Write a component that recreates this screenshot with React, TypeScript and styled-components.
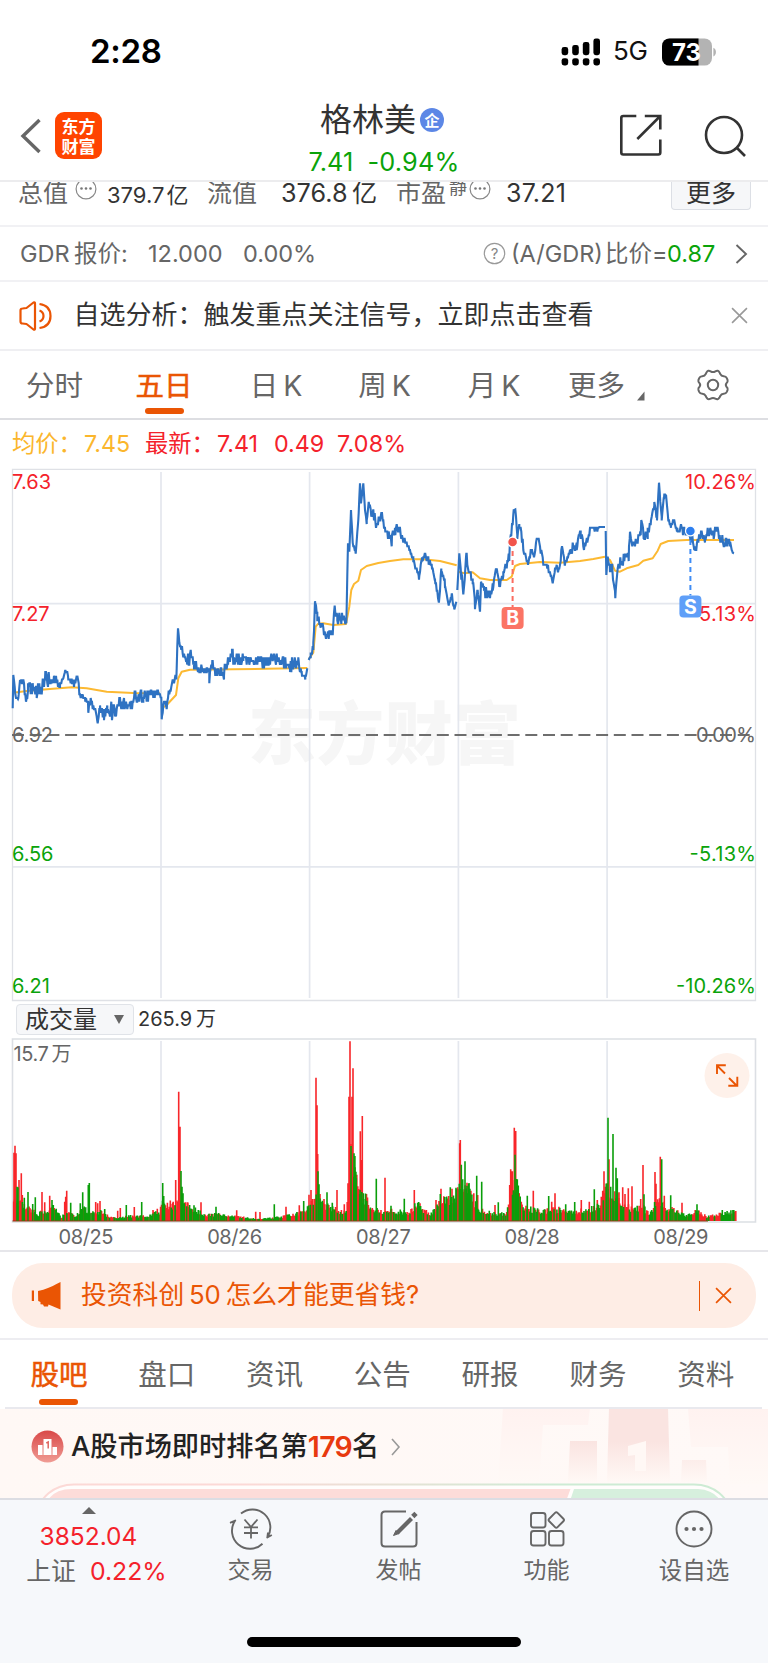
import React from "react";
import styled, { createGlobalStyle } from "styled-components";

const Global = createGlobalStyle`
  * { box-sizing: border-box; }
  body { margin: 0; background: #fff; font-family: Inter, "Noto Sans CJK SC", sans-serif; }
  svg { display: block; flex: none; overflow: visible; }
`;

const ORANGE = "#ea5504";
const RED = "#f4222b";
const GREEN = "#0aa30a";
const GRAY = "#666";
const INK = "#333";
const FONT = 'Inter, "Noto Sans CJK SC", sans-serif';

/* ---------- shared parts ---------- */

const Page = styled.main`
  width: 768px;
  height: 1663px;
  display: flex;
  flex-direction: column;
  overflow: hidden;
  background: #fff;
`;

const Text = styled.span<{ $w?: number; $ml?: number; $size?: number; $color?: string; $track?: number; $weight?: number }>`
  flex: none;
  display: block;
  width: ${(p) => (p.$w ? `${p.$w}px` : "auto")};
  margin-left: ${(p) => p.$ml ?? 0}px;
  font-size: ${(p) => p.$size ?? 24}px;
  font-weight: ${(p) => p.$weight ?? 400};
  line-height: 1.25;
  color: ${(p) => p.$color ?? GRAY};
  letter-spacing: ${(p) => p.$track ?? 0}px;
  white-space: nowrap;
`;

const Spacer = styled.div`
  flex: 1;
`;

/* ---------- status bar and header ---------- */

const StatusBar = styled.div`
  flex: none;
  height: 102px;
  padding: 1px 51px 0 90px;
  display: flex;
  align-items: center;
`;

const Header = styled.header`
  flex: none;
  height: 80px;
  display: grid;
  grid-template-columns: 240px 1fr 240px;
  border-bottom: 2px solid #ececee;
`;

const HeaderSide = styled.div<{ $end?: boolean }>`
  display: flex;
  align-items: center;
  height: 67px;
  padding: ${(p) => (p.$end ? "0 22px 0 0" : "0 0 0 20px")};
  justify-content: ${(p) => (p.$end ? "flex-end" : "flex-start")};
  gap: ${(p) => (p.$end ? 41 : 13)}px;
`;

const Logo = styled.div`
  width: 47px;
  height: 47px;
  border-radius: 9px;
  background: #ff4400;
  color: #fff;
  font: 700 17px/19.5px "Noto Sans CJK SC", sans-serif;
  display: flex;
  flex-direction: column;
  align-items: center;
  justify-content: center;
`;

const TitleBlock = styled.div`
  display: flex;
  flex-direction: column;
  align-items: center;
  gap: 9px;
`;

const TitleLine = styled.div`
  display: flex;
  align-items: center;
  height: 35px;
  gap: 4px;
  margin-right: 4px;
`;

const Badge = styled.span`
  width: 24px;
  height: 24px;
  border-radius: 50%;
  background: #5c87e6;
  color: #fff;
  font: 700 15px/23px "Noto Sans CJK SC", sans-serif;
  text-align: center;
`;

const PriceLine = styled.div`
  display: flex;
  gap: 14px;
`;

/* ---------- quote rows ---------- */

const QuoteRow = styled.section`
  flex: none;
  height: 45px;
  display: flex;
  align-items: flex-start;
  overflow: hidden;
  border-bottom: 2px solid #f1f1f4;
  padding-left: 18px;
`;

const QuoteCell = styled.div<{ $h: number }>`
  display: flex;
  align-items: center;
  height: ${(p) => p.$h}px;
`;

const MoreButton = styled.button`
  margin: 0 17px 0 auto;
  width: 80px;
  height: 28px;
  border: 1.5px solid #dcdfe5;
  border-top: 0;
  border-radius: 0 0 4px 4px;
  background: #f6f7f9;
  padding: 0;
  font: 25px/22px ${FONT};
  color: ${INK};
  display: flex;
  justify-content: center;
  align-items: flex-start;
`;

const Row = styled.section<{ $h: number; $line?: string; $pl?: number }>`
  flex: none;
  height: ${(p) => p.$h}px;
  display: flex;
  align-items: center;
  padding-left: ${(p) => p.$pl ?? 0}px;
  border-bottom: ${(p) => (p.$line ? `2px solid ${p.$line}` : "0")};
`;

const TabItem = styled.div<{ $w: number; $active?: boolean; $drop: number }>`
  position: relative;
  flex: none;
  width: ${(p) => p.$w}px;
  display: flex;
  justify-content: center;
  align-items: center;
  height: 100%;
  padding-top: 3px;
  color: ${(p) => (p.$active ? ORANGE : GRAY)};
  -webkit-text-stroke: ${(p) => (p.$active ? `0.5px ${ORANGE}` : "0")};
  font-size: 28.5px;
  line-height: 36px;
  word-spacing: -3px;
  &::after {
    content: "";
    display: ${(p) => (p.$active ? "block" : "none")};
    position: absolute;
    bottom: ${(p) => p.$drop}px;
    left: calc(50% - 19.5px);
    width: 39px;
    height: 6.5px;
    border-radius: 3px;
    background: ${ORANGE};
  }
`;

/* ---------- volume toolbar, promo, ranking ---------- */

const IndicatorButton = styled.button`
  width: 118px;
  height: 31px;
  padding: 0 9px 0 8px;
  border: 1.5px solid #e0e3e8;
  border-radius: 4px;
  background: #f6f7f9;
  display: flex;
  align-items: center;
  justify-content: space-between;
  font: 24px/28px ${FONT};
  color: ${INK};
`;

const Promo = styled.section`
  flex: none;
  height: 65px;
  margin: 11px 12px 10px;
  padding: 0 24px 0 19px;
  border-radius: 31px;
  background: #feede5;
  display: flex;
  align-items: center;
`;

const Rule = styled.div`
  width: 1.5px;
  height: 30px;
  background: ${ORANGE};
  margin-right: 15px;
`;

const InfoTabs = styled.nav`
  flex: none;
  height: 69px;
  display: flex;
  margin: 0 6px 0 5px;
  border-bottom: 2px solid #e9e9ee;
`;

const Ranking = styled.section`
  position: relative;
  flex: none;
  height: 89px;
  overflow: hidden;
  background: linear-gradient(90deg, #fff8f5, #fff9f7);
`;

const RankArt = styled.svg`
  position: absolute;
  left: 0;
  top: -1px;
`;

const RankTitle = styled.div`
  position: relative;
  display: flex;
  align-items: center;
  height: 75px;
  padding-left: 31px;
`;

/* ---------- bottom bar ---------- */

const BottomBar = styled.footer`
  flex: none;
  height: 165px;
  background: #f6f8fb;
  border-top: 2px solid #dcdde3;
  display: flex;
  flex-direction: column;
  align-items: center;
`;

const BottomItems = styled.div`
  width: 100%;
  height: 136.5px;
  display: grid;
  grid-template-columns: 177px 147px 149px 147px 148px;
`;

const BottomItem = styled.div`
  display: flex;
  flex-direction: column;
  align-items: center;
  padding-top: 9px;
  gap: 6.5px;
`;

const IndexItem = styled.div`
  display: flex;
  flex-direction: column;
  align-items: center;
  padding-top: 7px;
  gap: 7px;
`;

const IndexLine = styled.div`
  display: flex;
  gap: 14px;
  margin-left: 16px;
  margin-top: -3px;
`;

const HomeIndicator = styled.div`
  width: 274px;
  height: 10px;
  border-radius: 5px;
  background: #000;
`;

/* ---------- chart data, in thirds of a pixel from (0, 460) ---------- */

type Pt = [number, number, number?];

const price: Pt[][] = [
  [[38,745],[40,645],[48,720,8],[55,715],[60,660],[72,675,10],[78,725,4],[84,685,15],[110,690,15],[125,680,20],[135,655,20],[160,655,15],[180,668,8],[190,655],[196,630],[205,655,10],[215,665,15],[232,665,12],[240,705,8],[255,715,5],[265,740,20],[272,720,8],[285,755,12],[293,790],[300,740,10],[312,765,12],[322,740,18],[345,760,20],[355,725,12],[375,735,15],[395,735,12],[405,705,18],[430,708,18],[455,705,15],[472,695,10],[482,705,4]],
  [[484,710],[485,778],[490,730,8],[500,735,12],[508,690,8],[520,665,8],[529,650,6],[534,505],[540,560,8],[548,575,8],[558,600,6],[566,600,20],[574,585,15],[582,605,20],[595,628,8],[620,628,10],[628,650,15],[637,615,15],[650,635,10],[672,640,18],[684,605,8],[696,590,18],[710,595,20],[730,600,14],[760,605,12],[800,605,14],[828,595,18],[840,605,10],[870,612,18],[895,610,10],[905,640,10],[916,655,5],[922,625]],
  [[926,600],[932,585,4],[940,560,8],[945,424],[952,465,10],[965,490,12],[978,535,3],[990,515,10],[998,520,3],[1004,440,3],[1012,480,12],[1030,475,12],[1039,490],[1044,250],[1048,275],[1053,150],[1058,250,4],[1067,280,3],[1075,180],[1080,70],[1083,130],[1090,70],[1095,150],[1100,190,5],[1106,130,8],[1116,165,15],[1130,185,18],[1140,170,10],[1145,155,8],[1155,210,6],[1175,240,12],[1185,210,12],[1197,205,12],[1208,240,8],[1225,260,8],[1240,300,6],[1257,355,5],[1265,300,6],[1274,275,8],[1285,300,12],[1295,310,8],[1305,360,6],[1317,430,3],[1324,330,6],[1335,370,8],[1346,435,5],[1355,405,8],[1363,450,2],[1369,425]],
  [[1372,390],[1378,280],[1384,340,12],[1390,400,4],[1399,285,8],[1408,335,10],[1418,365,8],[1425,430,12],[1433,395,5],[1440,455],[1443,365],[1452,390,12],[1465,405,12],[1478,385,8],[1488,330,6],[1500,375,10],[1510,340,8],[1520,315,8],[1528,290,10],[1530,240],[1537,200,8],[1541,150],[1546,148],[1552,230,12],[1558,200,10],[1570,260,12],[1583,315,6],[1595,270,10],[1602,295,6],[1610,230,6],[1620,265,12],[1632,310,8],[1645,325,12],[1658,370,4],[1665,320,8],[1677,330,8],[1686,260,5],[1695,305,10],[1712,270,10],[1730,260,12],[1742,225,10],[1752,265,10],[1762,235,8],[1774,203,4],[1792,210,5],[1798,201],[1815,201]],
  [[1817,213],[1819,345],[1823,290],[1830,325,8],[1837,325,12],[1846,410,4],[1853,325],[1860,305,15],[1875,285,15],[1886,290,12],[1890,215],[1897,265,6],[1908,240,10],[1922,225,8],[1924,180],[1932,230,10],[1943,220,12],[1952,190,8],[1963,130,5],[1971,175,3],[1977,68],[1985,175,5],[1992,110,6],[1998,110,6],[2005,175,6],[2013,200,12],[2022,180,6],[2032,215,12],[2050,210,15],[2065,210,15],[2075,235,10],[2086,270,6],[2095,245,8],[2103,220,12],[2115,240,12],[2125,215,12],[2140,218,12],[2153,205,8],[2162,240,10],[2175,250,12],[2190,250,8],[2198,278],[2202,280]],
];

const average: Pt[][] = [
  [[40,698],[80,693],[150,687],[215,682],[260,685],[320,695],[400,699],[480,700]],
  [[486,745],[500,735],[528,705],[535,655],[545,635],[570,629],[700,628],[922,624]],
  [[926,598],[940,578],[947,500],[955,491],[970,490],[1000,495],[1038,492],[1048,440],[1054,390],[1062,372],[1075,362],[1083,330],[1100,318],[1135,309],[1170,303],[1210,298],[1270,298],[1320,303],[1370,316]],
  [[1374,335],[1395,340],[1418,337],[1440,355],[1470,360],[1520,360],[1535,350],[1545,318],[1560,312],[1620,306],[1680,308],[1740,303],[1780,297],[1815,290]],
  [[1819,292],[1830,300],[1845,332],[1860,335],[1880,325],[1915,315],[1930,302],[1958,295],[1973,272],[1982,252],[2005,243],[2060,240],[2202,240]],
];

const makeRandom = (seed: number) => () => {
  seed = (seed * 1103515245 + 12345) & 0x7fffffff;
  return (seed >> 8) / 0x7fffff;
};

const lerpAt = (pts: Pt[], x: number, k: 1 | 2) => {
  let i = 0;
  while (i < pts.length - 2 && pts[i + 1][0] < x) i++;
  const a = pts[i], b = pts[i + 1];
  const t = Math.min(1, Math.max(0, (x - a[0]) / (b[0] - a[0])));
  return (a[k] ?? 0) * (1 - t) + (b[k] ?? 0) * t;
};

const pricePath = (() => {
  const rnd = makeRandom(71);
  return price
    .map((day) => {
      const xs: number[] = day.map((p) => p[0]);
      for (let x = day[0][0] + 2; x < day[day.length - 1][0]; x += 2) xs.push(x);
      xs.sort((a, b) => a - b);
      return xs
        .map((x, i) => {
          const amp = lerpAt(day, x, 2);
          const y = lerpAt(day, x, 1) + (rnd() * 2 - 1) * amp * 1.3;
          const snapped = amp > 2 ? 825 - Math.round((825 - y) / 11.1) * 11.1 : y;
          return `${i ? "L" : "M"}${(x / 3).toFixed(1)} ${(snapped / 3).toFixed(1)}`;
        })
        .join("");
    })
    .join("");
})();

const averagePath = average
  .map((day) => day.map((p, i) => `${i ? "L" : "M"}${(p[0] / 3).toFixed(1)} ${(p[1] / 3).toFixed(1)}`).join(""))
  .join("");

/* volume bars: positions in thirds of a pixel, tops measured down from y = 1030 */
const redSpikes = [[42,368],[45,347],[48,370],[57,450],[64,430],[67,495],[126,486],[134,517],[149,497],[194,515],[197,500],[200,482],[287,516],[293,520],[300,513],[353,542],[361,534],[403,531],[459,540],[472,536],[512,522],[518,518],[527,450],[536,185],[540,290],[563,520],[603,517],[710,541],[767,545],[780,546],[858,530],[898,526],[927,494],[933,480],[948,143],[951,226],[953,372],[960,492],[1011,480],[1033,523],[1044,460],[1047,200],[1050,34],[1056,200],[1059,115],[1075,485],[1081,304],[1084,390],[1087,258],[1155,443],[1243,480],[1260,520],[1308,510],[1323,476],[1342,511],[1356,476],[1373,472],[1379,340],[1381,330],[1401,458],[1433,495],[1485,525],[1529,465],[1532,418],[1537,424],[1543,293],[1547,303],[1556,490],[1564,515],[1600,482],[1655,515],[1665,490],[1744,510],[1768,515],[1792,510],[1804,500],[1808,482],[1812,424],[1817,470],[1827,388],[1857,487],[1868,472],[1875,492],[1885,475],[1896,469],[1922,507],[1929,405],[1965,426],[1968,461],[1981,380],[1993,497],[2046,518]];
const greenSpikes = [[51,470],[54,472],[73,503],[84,486],[98,522],[106,502],[156,510],[160,525],[212,518],[241,520],[248,487],[257,532],[265,465],[268,459],[314,537],[379,525],[425,516],[488,459],[491,498],[543,423],[546,470],[549,490],[553,520],[582,526],[648,530],[823,523],[911,513],[954,424],[957,463],[967,512],[981,487],[997,518],[1053,348],[1062,370],[1065,412],[1069,445],[1080,480],[1090,490],[1100,512],[1129,446],[1173,527],[1213,506],[1321,492],[1351,472],[1368,473],[1384,404],[1388,448],[1395,394],[1406,462],[1410,490],[1430,437],[1445,455],[1495,517],[1545,374],[1552,448],[1582,497],[1646,498],[1697,523],[1724,516],[1783,478],[1824,263],[1832,470],[1839,312],[1848,413],[1852,445],[1932,493],[1985,388],[2012,496],[2091,523],[2167,540]];
const volumeBase: Pt[] = [[40,60],[60,60],[90,35],[115,20],[130,30],[165,35],[185,10],[200,35],[225,15],[245,40],[265,30],[280,25],[300,30],[330,12],[350,8],[390,15],[440,14],[480,30],[490,55],[530,50],[555,50],[590,35],[615,18],[650,20],[700,15],[770,6],[840,12],[885,20],[920,35],[945,65],[965,60],[990,40],[1030,25],[1045,60],[1053,200],[1065,160],[1075,90],[1090,80],[1120,40],[1150,30],[1180,30],[1230,25],[1250,50],[1290,22],[1320,55],[1370,80],[1390,120],[1410,90],[1430,50],[1450,30],[1490,20],[1520,25],[1535,80],[1548,120],[1565,40],[1620,30],[1680,35],[1750,30],[1800,50],[1815,90],[1840,95],[1860,55],[1900,35],[1930,40],[1950,25],[1970,60],[1990,50],[2030,30],[2060,15],[2090,30],[2120,14],[2150,18],[2180,25],[2207,28]];

const bar = (x: number, h: number) => `M${(x / 3).toFixed(1)} 191v${(-h / 3).toFixed(1)}`;

const volume = (() => {
  const rnd = makeRandom(19);
  let red = "", green = "";
  let up = true;
  for (let x = 41; x < 2208; x += 2.9) {
    if (rnd() < 0.42) up = !up;
    const h = Math.max(6, lerpAt(volumeBase, x, 1) * (0.65 + rnd() * 0.6));
    if (up) red += bar(x, h);
    else green += bar(x, h);
  }
  return {
    red, green,
    redSpikes: redSpikes.map(([x, y]) => bar(x, 573 - y)).join(""),
    greenSpikes: greenSpikes.map(([x, y]) => bar(x, 573 - y)).join(""),
  };
})();

/* ---------- drawings ---------- */

const Dots = ({ size = 22 }: { size?: number }) => (
  <svg width={size} height={size} viewBox="0 0 22 22">
    <circle cx="11" cy="11" r="9.9" fill="none" stroke="#888" strokeWidth="1.2" />
    {[6.5, 11, 15.5].map((x) => <circle key={x} cx={x} cy="10.5" r="1.3" fill="#777" />)}
  </svg>
);

const Cross = ({ size, color, width }: { size: number; color: string; width: number }) => (
  <svg width={size} height={size} viewBox="0 0 16 16" stroke={color} strokeWidth={width}>
    <path d="M1 1l14 14M15 1L1 15" />
  </svg>
);

const Signal = () => (
  <svg width="40" height="28" viewBox="0 0 40 28">
    {[0, 10.6, 21.2, 31.8].map((x, i) => {
      const top = [9, 7, 4, 0.5][i];
      return (
        <g key={x}>
          <rect x={x + 0.6} y={top} width="6.6" height={17.2 - top} rx="2.4" />
          <rect x={x + 0.6} y="20.2" width="6.6" height="7.2" rx="2.4" />
        </g>
      );
    })}
  </svg>
);

const Battery = () => (
  <svg width="55" height="28" viewBox="0 0 55 28">
    <defs>
      <clipPath id="cell"><rect x="0" y="0.4" width="50" height="27.2" rx="7.5" /></clipPath>
    </defs>
    <g clipPath="url(#cell)">
      <rect width="50" height="28" fill="#b3b3b3" />
      <rect width="36.5" height="28" fill="#000" />
    </g>
    <path d="M51.4 9.8c3.4 1.4 3.4 7.2 0 8.6z" fill="#b3b3b3" />
    <text x="24.5" y="22.5" textAnchor="middle" fontFamily={FONT} fontSize="24" fontWeight="700" fill="#fff" textLength="29">73</text>
  </svg>
);

const Gear = () => (
  <svg width="32" height="32" viewBox="0 0 32 32" fill="none" stroke={GRAY} strokeWidth="2">
    <path strokeLinejoin="round" d="M9.5 3.4Q11 .8 13.6 2.3Q16 3.8 18.4 2.3Q21 .8 22.5 3.4L23.4 5.2Q24.2 7.2 26.7 7.3Q29 7.4 29.8 9.2L30.6 11.2Q31 13 29.5 14.2Q28.1 16 29.5 17.8Q31 19 30.6 20.8L29.8 22.8Q29 24.6 26.7 24.7Q24.2 24.8 23.4 26.8L22.5 28.6Q21 31.2 18.4 29.7Q16 28.2 13.6 29.7Q11 31.2 9.5 28.6L8.6 26.8Q7.8 24.8 5.3 24.7Q3 24.6 2.2 22.8L1.4 20.8Q1 19 2.5 17.8Q3.9 16 2.5 14.2Q1 13 1.4 11.2L2.2 9.2Q3 7.4 5.3 7.3Q7.8 7.2 8.6 5.2Z" />
    <circle cx="16" cy="16" r="5.2" />
  </svg>
);

const ChartLabel = ({ x, y, end, color, len, children }: { x: number; y: number; end?: boolean; color: string; len: number; children: string }) => (
  <text x={end ? x - len : x} y={y} fontSize="20" fill={color} textLength={len} lengthAdjust="spacing">{children}</text>
);

const Marker = ({ x, y, dotY, letter, fill, dot, line }: { x: number; y: number; dotY: number; letter: string; fill: string; dot: string; line: string }) => (
  <g>
    <path d={`M${x} ${dotY}V${y}`} stroke={line} strokeWidth="2" strokeDasharray="5 4" fill="none" />
    <circle cx={x} cy={dotY} r="4.9" fill={dot} stroke="#fff" strokeWidth="1.2" />
    <rect x={x - 11} y={y} width="22" height="22" rx="4" fill={fill} />
    <text x={x} y={y + 18.2} textAnchor="middle" fontSize="19.5" fontWeight="700" fill="#fff">{letter}</text>
  </g>
);

const PriceChart = () => (
  <svg width="768" height="534" viewBox="0 8 768 534" fontFamily={FONT}>
    <text x="248" y="299" fontSize="68" fontWeight="900" fill="#f6f6f6" textLength="273">东方财富</text>
    <g stroke="#e4e7ee" strokeWidth="1.7" fill="none">
      <path d="M161 12V538M309.6 12V538M458.4 12V538M607.1 12V538M12 143.7H755.5M12 406.8H755.5" />
      <path d="M12.5 9.3H755.5V540.5H12.5Z" stroke="#dfe1e6" strokeWidth="1.3" />
    </g>
    <path d="M12 275H755" stroke="#6e6e6e" strokeWidth="2.2" strokeDasharray="12 5.7" />
    <path d={averagePath} fill="none" stroke="#fcb932" strokeWidth="2" strokeLinejoin="round" />
    <path d={pricePath} fill="none" stroke="#2e72c2" strokeWidth="2.1" strokeLinejoin="miter" strokeMiterlimit="3" />
    <Marker x={512.6} y={147} dotY={82} letter="B" fill="#fb7465" dot="#f2544b" line="#fb6c60" />
    <ChartLabel x={12} y={29} color={RED} len={39}>7.63</ChartLabel>
    <ChartLabel x={12} y={161} color={RED} len={37.5}>7.27</ChartLabel>
    <ChartLabel x={12} y={281.5} color={GRAY} len={41}>6.92</ChartLabel>
    <ChartLabel x={12} y={401} color={GREEN} len={41.5}>6.56</ChartLabel>
    <ChartLabel x={12} y={533} color={GREEN} len={38}>6.21</ChartLabel>
    <ChartLabel end x={756} y={29} color={RED} len={71}>10.26%</ChartLabel>
    <ChartLabel end x={756} y={161} color={RED} len={57}>5.13%</ChartLabel>
    <ChartLabel end x={756} y={281.5} color={GRAY} len={60}>0.00%</ChartLabel>
    <ChartLabel end x={756} y={401} color={GREEN} len={66.5}>-5.13%</ChartLabel>
    <ChartLabel end x={756} y={533} color={GREEN} len={80}>-10.26%</ChartLabel>
    <Marker x={690.4} y={135.5} dotY={71} letter="S" fill="#5f9ff8" dot="#2d7ff0" line="#3e8cf5" />
  </svg>
);

const VolumeChart = () => (
  <svg width="768" height="213" viewBox="0 7 768 213" fontFamily={FONT}>
    <path d="M161 11V191M309.6 11V191M458.4 11V191M607.1 11V191" stroke="#e4e7ee" strokeWidth="1.7" />
    <path d="M12.5 9H755.5V192H12.5Z" fill="none" stroke="#dcdfe4" strokeWidth="1.6" />
    <g fill="none" strokeWidth="1.6">
      <path d={volume.redSpikes} stroke="#f8262a" />
      <path d={volume.red} stroke="#f8262a" />
      <path d={volume.greenSpikes} stroke="#0a9e0a" />
      <path d={volume.green} stroke="#0a9e0a" />
    </g>
    <path d="M12.5 191H708" stroke="#8a3a10" strokeWidth="1.2" />
    <text x="13.5" y="31" fontSize="20" fill={GRAY} textLength="58">{"15.7\u2009万"}</text>
    <circle cx="727" cy="45.5" r="22.5" fill="#fef1ea" />
    <path d="M725 43.5L717.3 35.8M717 44V35.3H725.8M729 48L737 56M737.3 46.7V55.7H728.3" fill="none" stroke={ORANGE} strokeWidth="1.9" />
    {["08/25", "08/26", "08/27", "08/28", "08/29"].map((d, i) => (
      <text key={d} x={58.5 + i * 148.7} y="214" fontSize="20" fill={GRAY} textLength="55">{d}</text>
    ))}
  </svg>
);

/* ---------- page ---------- */

const infoTabs = ["股吧", "盘口", "资讯", "公告", "研报", "财务", "资料"];

export default function App() {
  return (
    <Page>
      <Global />
      <StatusBar>
        <Text $size={33} $weight={600} $color="#000" $track={-0.3}>2:28</Text>
        <Spacer />
        <Signal />
        <Text $size={26} $ml={12} $w={49} $color="#111" $track={-0.2}>5G</Text>
        <Battery />
      </StatusBar>

      <Header>
        <HeaderSide>
          <svg width="22" height="36" viewBox="0 0 22 36" fill="none" stroke={GRAY} strokeWidth="3.4"><path d="M19.5 2L3 18L19.5 34" /></svg>
          <Logo><span>东方</span><span>财富</span></Logo>
        </HeaderSide>
        <TitleBlock>
          <TitleLine>
            <Text $size={32} $color={INK}>格林美</Text>
            <Badge>企</Badge>
          </TitleLine>
          <PriceLine>
            <Text $size={25.3} $color={GREEN} $track={0.1}>7.41</Text>
            <Text $size={25.3} $color={GREEN} $track={0.2}>-0.94%</Text>
          </PriceLine>
        </TitleBlock>
        <HeaderSide $end>
          <svg width="43" height="43" viewBox="0 0 43 43" fill="none" stroke={INK} strokeWidth="2.6">
            <path d="M17 2.5H4Q2 2.5 2 4.5V39Q2 41 4 41H39Q41 41 41 39V26M25.5 2.500H41V16M40.5 3L18 25.500" transform="translate(-.7 -.5)" />
          </svg>
          <svg width="42" height="42" viewBox="0 0 42 42" fill="none" stroke={INK} strokeWidth="2.6">
            <circle cx="20" cy="20" r="18" /><path d="M32.5 32.5L41 41" />
          </svg>
        </HeaderSide>
      </Header>

      <QuoteRow>
        <QuoteCell $h={23}>
          <Text $size={25} $w={57}>总值</Text>
        </QuoteCell>
        <QuoteCell $h={13}><Dots /></QuoteCell>
        <QuoteCell $h={27}><Text $size={22} $ml={10} $w={82} $color={INK}>{"379.7\u200a亿"}</Text></QuoteCell>
        <QuoteCell $h={23}>
          <Text $size={25} $ml={18} $w={74}>流值</Text>
          <Text $size={25.2} $w={97} $color={INK}>{"376.8\u2009亿"}</Text>
          <Text $size={25} $ml={18} $w={53}>市盈</Text>
        </QuoteCell>
        <QuoteCell $h={13}>
          <Text $size={18} $w={20}>静</Text>
          <Dots />
        </QuoteCell>
        <QuoteCell $h={23}>
          <Text $size={25} $ml={15} $color={INK} $track={0.2}>37.21</Text>
        </QuoteCell>
        <MoreButton>更多</MoreButton>
      </QuoteRow>

      <Row $h={55} $line="#f1f1f4" $pl={20}>
        <Text $size={23.5} $w={128}>{"GDR\u2009报价:"}</Text>
        <Text $size={23.5} $w={95}>12.000</Text>
        <Text $size={23.5}>0.00%</Text>
        <Spacer />
        <svg width="23" height="23" viewBox="0 0 23 23">
          <circle cx="11.5" cy="11.5" r="10.2" fill="none" stroke="#999" strokeWidth="1.2" />
          <text x="11.5" y="17" textAnchor="middle" fontFamily={FONT} fontSize="15" fill="#888">?</text>
        </svg>
        <Text $size={23.5} $ml={5} $w={94}>(A/GDR)</Text>
        <Text $size={23.5} $w={62}>比价=</Text>
        <Text $size={23.5} $w={68} $color={GREEN}>0.87</Text>
        <svg width="13" height="20" viewBox="0 0 13 20" fill="none" stroke={GRAY} strokeWidth="1.9"><path d="M1.5 1L11 10L1.5 19" /></svg>
        <Text $w={20}>{" "}</Text>
      </Row>

      <Row $h={69} $line="#efeff2" $pl={19}>
        <svg width="34" height="30" viewBox="0 0 34 30" fill="none" stroke={ORANGE} strokeWidth="2.2" strokeLinejoin="round">
          <path d="M1.5 9.5Q1.5 7.5 3.5 7.5L7.5 7L14.5 1.5Q16 .8 16 2.5V27.5Q16 29.2 14.5 28.5L7.5 23L3.5 22.5Q1.5 22.5 1.5 20.5Z" />
          <path d="M20.5 9.5Q24.5 11 24.5 15Q24.5 19 20.5 20.5M20.5 3Q31.5 4.5 31.5 15Q31.5 25.5 20.5 27" />
        </svg>
        <Text $size={26} $ml={20.5} $color={INK}>自选分析：触发重点关注信号，立即点击查看</Text>
        <Spacer />
        <Cross size={17} color="#999" width={1.5} />
        <Text $w={20}>{" "}</Text>
      </Row>

      <Row $h={69} $line="#dddee2" as="nav">
        <TabItem $w={109} $drop={4}>分时</TabItem>
        <TabItem $w={110} $drop={4} $active>五日</TabItem>
        <TabItem $w={114} $drop={4}>日 K</TabItem>
        <TabItem $w={103} $drop={4}>周 K</TabItem>
        <TabItem $w={116} $drop={4}>月 K</TabItem>
        <TabItem $w={89} $drop={4}>更多</TabItem>
        <svg width="56" height="32" viewBox="6 0 56 32"><path d="M9.5 31.5H2L9.5 22.5Z" fill={GRAY} /></svg>
        <Gear />
      </Row>

      <Row $h={48} $pl={12}>
        <Text $size={23.3} $w={72}  $color="#fbb62c">均价：</Text>
        <Text $size={23.3} $w={61} $color="#fbb62c">7.45</Text>
        <Text $size={23.3} $w={72} $color={RED}>最新：</Text>
        <Text $size={23.3} $w={57} $color={RED}>7.41</Text>
        <Text $size={23.3} $w={63} $color={RED}>0.49</Text>
        <Text $size={23.3} $color={RED} $track={0.2}>7.08%</Text>
      </Row>

      <PriceChart />
      <Row $h={35} $pl={16}>
        <IndicatorButton>
          成交量
          <svg width="10" height="9" viewBox="0 0 10 9"><path d="M0 0H10L5 9Z" fill={GRAY} /></svg>
        </IndicatorButton>
        <Text $size={20} $ml={4} $color={INK}>{"265.9\u2009万"}</Text>
      </Row>
      <VolumeChart />
      <Row $h={1} $line="#e6e6ea" />

      <Promo>
        <svg width="32" height="28" viewBox="0 0 32 28" fill={ORANGE}>
          <path d="M.8 8.5H3V19H.8ZM7 9Q18 6.500 25 2.200L29.500 0V27.500L17.500 22.500L17 24.500H13L12 22.500L9.500 22.200V20L7.200 19Z" />
        </svg>
        <Text $size={25.8} $ml={18} $color={ORANGE}>{"投资科创\u2009"}50{"\u2009怎么才能更省钱?"}</Text>
        <Spacer />
        <Rule />
        <Cross size={17} color={ORANGE} width={1.6} />
      </Promo>
      <Row $h={1} $line="#ededf1" />
      <InfoTabs>
        {infoTabs.map((t, i) => <TabItem key={t} $w={107.8} $drop={2} $active={i === 0}>{t}</TabItem>)}
      </InfoTabs>

      <Ranking>
        <RankArt width="768" height="90" viewBox="0 0 768 90">
          <defs>
            <linearGradient id="strong" x1="0" y1="0" x2="0" y2="1"><stop offset=".45" stopColor="#fae4e1" /><stop offset="1" stopColor="#fff8f5" /></linearGradient>
            <linearGradient id="faint" x1="0" y1="0" x2="0" y2="1"><stop stopColor="#fff2f0" /><stop offset="1" stopColor="#fff9f6" /></linearGradient>
            <linearGradient id="ring"><stop offset=".3" stopColor="#fcd9d6" /><stop offset=".75" stopColor="#cdebd4" /></linearGradient>
          </defs>
          <path d="M503 0H590L588 17H543L539 76H498ZM688 0H768V76H730L728 39H691Z" fill="url(#faint)" />
          <path d="M609 0H668L670 74H607ZM570 33H597V74H568ZM682 52H706L707 74H681Z" fill="url(#strong)" />
          <path d="M628 38L646 33V63H635V47L628 48Z" fill="#fff8f5" />
          <rect x="38" y="76.5" width="692" height="60" rx="36" ry="30" fill="#fffdfc" stroke="url(#ring)" strokeWidth="2" />
          <path d="M46 96Q52 81 72 81H570.5L565 96Z" fill="#fddcd9" />
          <path d="M574 81H698Q716 82 722 96H569Z" fill="#d6efdd" />
        </RankArt>
        <RankTitle>
          <svg width="33" height="33" viewBox="0 0 33 33">
            <defs><linearGradient id="medal" x1="0" y1="0" x2="0" y2="1"><stop stopColor="#d94848" /><stop offset="1" stopColor="#f09c94" /></linearGradient></defs>
            <circle cx="16.5" cy="16.5" r="16" fill="url(#medal)" />
            <path d="M7 15H11.5V25H7ZM12.5 9H20.5V25H12.5ZM21.5 17H26V25H21.5Z" fill="#fff" />
            <path d="M15.3 13L17.2 12V18.5" fill="none" stroke="#df6560" strokeWidth="1.5" />
          </svg>
          <Text $size={27.2} $ml={7} $weight={500} $color="#222">A股市场即时排名第</Text>
          <Text $size={28.5} $weight={600} $color="#e8390f" $track={-0.7}>179</Text>
          <Text $size={27.2} $weight={500} $color="#222">名</Text>
          <svg width="22" height="16" viewBox="-12 0 22 16" fill="none" stroke="#999" strokeWidth="1.6"><path d="M1 0L8 8L1 16" /></svg>
        </RankTitle>
      </Ranking>

      <BottomBar>
        <BottomItems>
          <IndexItem>
            <svg width="14" height="7" viewBox="0 0 14 7"><path d="M0 7L7 0L14 7Z" fill={GRAY} /></svg>
            <Text $size={24.5} $color={RED}>3852.04</Text>
            <IndexLine>
              <Text $size={24.8}>上证</Text>
              <Text $size={24.8} $color={RED}>0.22%</Text>
            </IndexLine>
          </IndexItem>
          <BottomItem>
            <svg width="44" height="40" viewBox="0 0 44 40" fill="none" stroke={GRAY} strokeWidth="1.9">
              <path d="M12 4.5A18 18 0 0 1 38.300 28.500L42.800 26M33.500 34.700A18 18 0 0 1 6.200 11.500L1 13.800M38.300 28.800L39 23.500" strokeLinejoin="round" />
              <path d="M15.5 10.5L22 18L28.5 10.5M22 18V29.5M15 18.3H29M15 24H29" strokeWidth="1.8" />
            </svg>
            <Text $size={23}>交易</Text>
          </BottomItem>
          <BottomItem>
            <svg width="40" height="40" viewBox="0 0 40 40" fill="none" stroke={GRAY} strokeWidth="2">
              <path d="M27 2.5H6Q2.5 2.5 2.5 6V34Q2.5 37.5 6 37.5H34Q37.5 37.5 37.5 34V13" />
              <path d="M32.5 9.5L18 24" strokeWidth="4.2" /><path d="M33.8 7.5L37 4.3" strokeWidth="4.6" /><path d="M17 21.500L14.500 26.500L20 24.500Z" fill={GRAY} strokeWidth="1" />
            </svg>
            <Text $size={23}>发帖</Text>
          </BottomItem>
          <BottomItem>
            <svg width="40" height="40" viewBox="0 0 40 40" fill="none" stroke={GRAY} strokeWidth="1.9">
              <rect x="4" y="4" width="14.5" height="14.5" rx="2.5" /><rect x="4" y="22" width="14.5" height="14.5" rx="2.5" /><rect x="22" y="22" width="14.5" height="14.5" rx="2.5" />
              <rect x="23.4" y="5.1" width="11.8" height="11.8" rx="1.8" transform="rotate(45 29.3 11)" />
            </svg>
            <Text $size={23}>功能</Text>
          </BottomItem>
          <BottomItem>
            <svg width="40" height="40" viewBox="0 0 40 40">
              <circle cx="20" cy="20" r="17.5" fill="none" stroke={GRAY} strokeWidth="1.9" />
              {[12.5, 20, 27.5].map((x) => <circle key={x} cx={x} cy="20" r="2.1" fill={GRAY} />)}
            </svg>
            <Text $size={23.5}>设自选</Text>
          </BottomItem>
        </BottomItems>
        <HomeIndicator />
      </BottomBar>
    </Page>
  );
}
